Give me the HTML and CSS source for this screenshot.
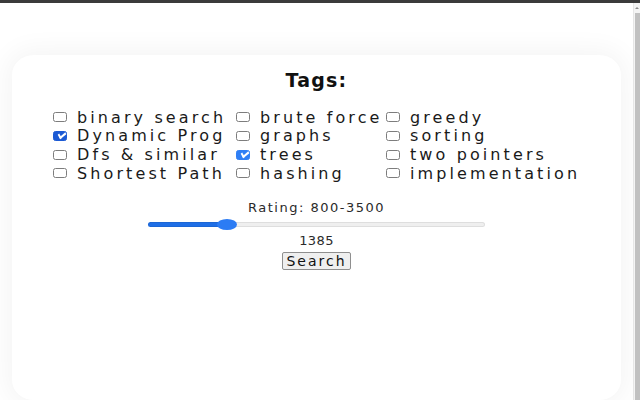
FILE: index.html
```html
<!DOCTYPE html>
<html lang="en">
<head>
<meta charset="utf-8">
<title>Tags</title>
<link rel="stylesheet" href="styles.css">
</head>
<body>
<div class="topbar"></div>
<div class="frame">
  <main class="page">
    <section class="card">
      <h2 class="title">Tags:</h2>
      <div class="tags">
        <label class="tag"><input type="checkbox" class="cb"><span>binary search</span></label>
        <label class="tag"><input type="checkbox" class="cb"><span>brute force</span></label>
        <label class="tag"><input type="checkbox" class="cb"><span>greedy</span></label>
        <label class="tag"><input type="checkbox" class="cb cb-dark" checked><span>Dynamic Prog</span></label>
        <label class="tag"><input type="checkbox" class="cb"><span>graphs</span></label>
        <label class="tag"><input type="checkbox" class="cb"><span>sorting</span></label>
        <label class="tag"><input type="checkbox" class="cb"><span>Dfs &amp; similar</span></label>
        <label class="tag"><input type="checkbox" class="cb" checked><span>trees</span></label>
        <label class="tag"><input type="checkbox" class="cb"><span>two pointers</span></label>
        <label class="tag"><input type="checkbox" class="cb"><span>Shortest Path</span></label>
        <label class="tag"><input type="checkbox" class="cb"><span>hashing</span></label>
        <label class="tag"><input type="checkbox" class="cb"><span>implementation</span></label>
      </div>
      <div class="rating">
        <div class="rating-label">Rating: 800-3500</div>
        <input type="range" class="slider" min="800" max="3500" value="1385" style="--pct:0.2167">
        <div class="rating-value">1385</div>
        <button class="search" type="button">Search</button>
      </div>
    </section>
  </main>
  <div class="scrollbar">
    <div class="sb-arrow"></div>
    <div class="sb-thumb"></div>
  </div>
</div>
</body>
</html>
```

FILE: styles.css
```css
* { box-sizing: border-box; }

html, body {
  margin: 0;
  height: 400px;
  overflow: hidden;
}

body {
  background: #ffffff;
  font-family: "DejaVu Sans", "Noto Sans", sans-serif;
  color: #1e1e1e;
  display: flex;
  flex-direction: column;
}

.topbar {
  height: 3px;
  background: #3b3b3b;
  flex: none;
}

.frame {
  flex: 1;
  display: flex;
  min-height: 0;
}

.page {
  flex: 1;
  padding: 52px 12px 0 12px;
  min-width: 0;
}

.card {
  height: 345px;
  background: #ffffff;
  border-radius: 22px / 20px;
  box-shadow: 0 0 26px 6px rgba(0, 0, 0, 0.045);
  padding: 14px 0 0 41px;
  display: flex;
  flex-direction: column;
}

.title {
  margin: 0 41px 0 0;
  text-align: center;
  font-size: 19px;
  line-height: 22px;
  font-weight: bold;
  letter-spacing: 1.2px;
  color: #111;
}

.tags {
  margin-top: 17px;
  display: grid;
  grid-template-columns: 183px 150px auto;
}

.tag {
  display: flex;
  align-items: center;
  height: 18.67px;
  font-size: 16px;
  letter-spacing: 3.1px;
  white-space: nowrap;
  color: #1a1a1a;
}

.cb {
  -webkit-appearance: none;
  appearance: none;
  position: relative;
  flex: none;
  width: 14px;
  height: 10px;
  margin: 0 10px 0 0;
  border: 1px solid #7d7d7d;
  border-radius: 2.5px;
  background: #fff;
}

.cb:checked {
  background: #2f7ff5;
  border-color: #2f7ff5;
}

.cb-dark:checked {
  background: #1c5ad4;
  border-color: #1c5ad4;
}

.cb:checked::after {
  content: "";
  position: absolute;
  left: 3.5px;
  top: 0.5px;
  width: 6px;
  height: 3px;
  border-left: 2px solid #fff;
  border-bottom: 2px solid #fff;
  transform: rotate(-40deg) skewX(-10deg);
}

.rating {
  margin: 17px 41px 0 0;
  display: flex;
  flex-direction: column;
  align-items: center;
}

.rating-label {
  font-size: 13px;
  line-height: 15px;
  letter-spacing: 1.5px;
  color: #2a2a2a;
}

.rating-value {
  margin-top: 3px;
  font-size: 13px;
  line-height: 15px;
  letter-spacing: 0.4px;
  color: #2a2a2a;
}

.slider {
  -webkit-appearance: none;
  appearance: none;
  width: 337px;
  height: 11px;
  margin: 4px 0 0 0;
  background: transparent;
  --fill: calc(10px + var(--pct) * (100% - 20px));
}

.slider::-webkit-slider-runnable-track {
  height: 5px;
  border-radius: 3px;
  background: linear-gradient(to right, #1f6fe6 0, #1f6fe6 var(--fill), #efefef var(--fill), #efefef 100%);
  box-shadow: inset 0 0 0 1px rgba(0, 0, 0, 0.07);
}

.slider::-webkit-slider-thumb {
  -webkit-appearance: none;
  appearance: none;
  width: 20px;
  height: 11px;
  margin-top: -3px;
  border-radius: 50%;
  background: #2c7cf4;
  border: none;
}

.search {
  margin-top: 4px;
  height: 18px;
  padding: 0 3px;
  font-family: inherit;
  font-size: 14px;
  line-height: 16px;
  letter-spacing: 2px;
  color: #111;
  background: #efefef;
  border: 1px solid #8f8f8f;
  border-radius: 2px;
}

.scrollbar {
  flex: none;
  width: 7px;
  display: flex;
  flex-direction: column;
  background: #f4f4f4;
  border-left: 1px solid #e6e6e6;
}

.sb-arrow {
  height: 10px;
  flex: none;
  position: relative;
}

.sb-arrow::after {
  content: "";
  position: absolute;
  left: 1px;
  top: 4px;
  border-left: 2px solid transparent;
  border-right: 2px solid transparent;
  border-bottom: 2px solid #8a8a8a;
}

.sb-thumb {
  flex: 1;
  margin-left: 1px;
  background: #c1c1c1;
}
```
